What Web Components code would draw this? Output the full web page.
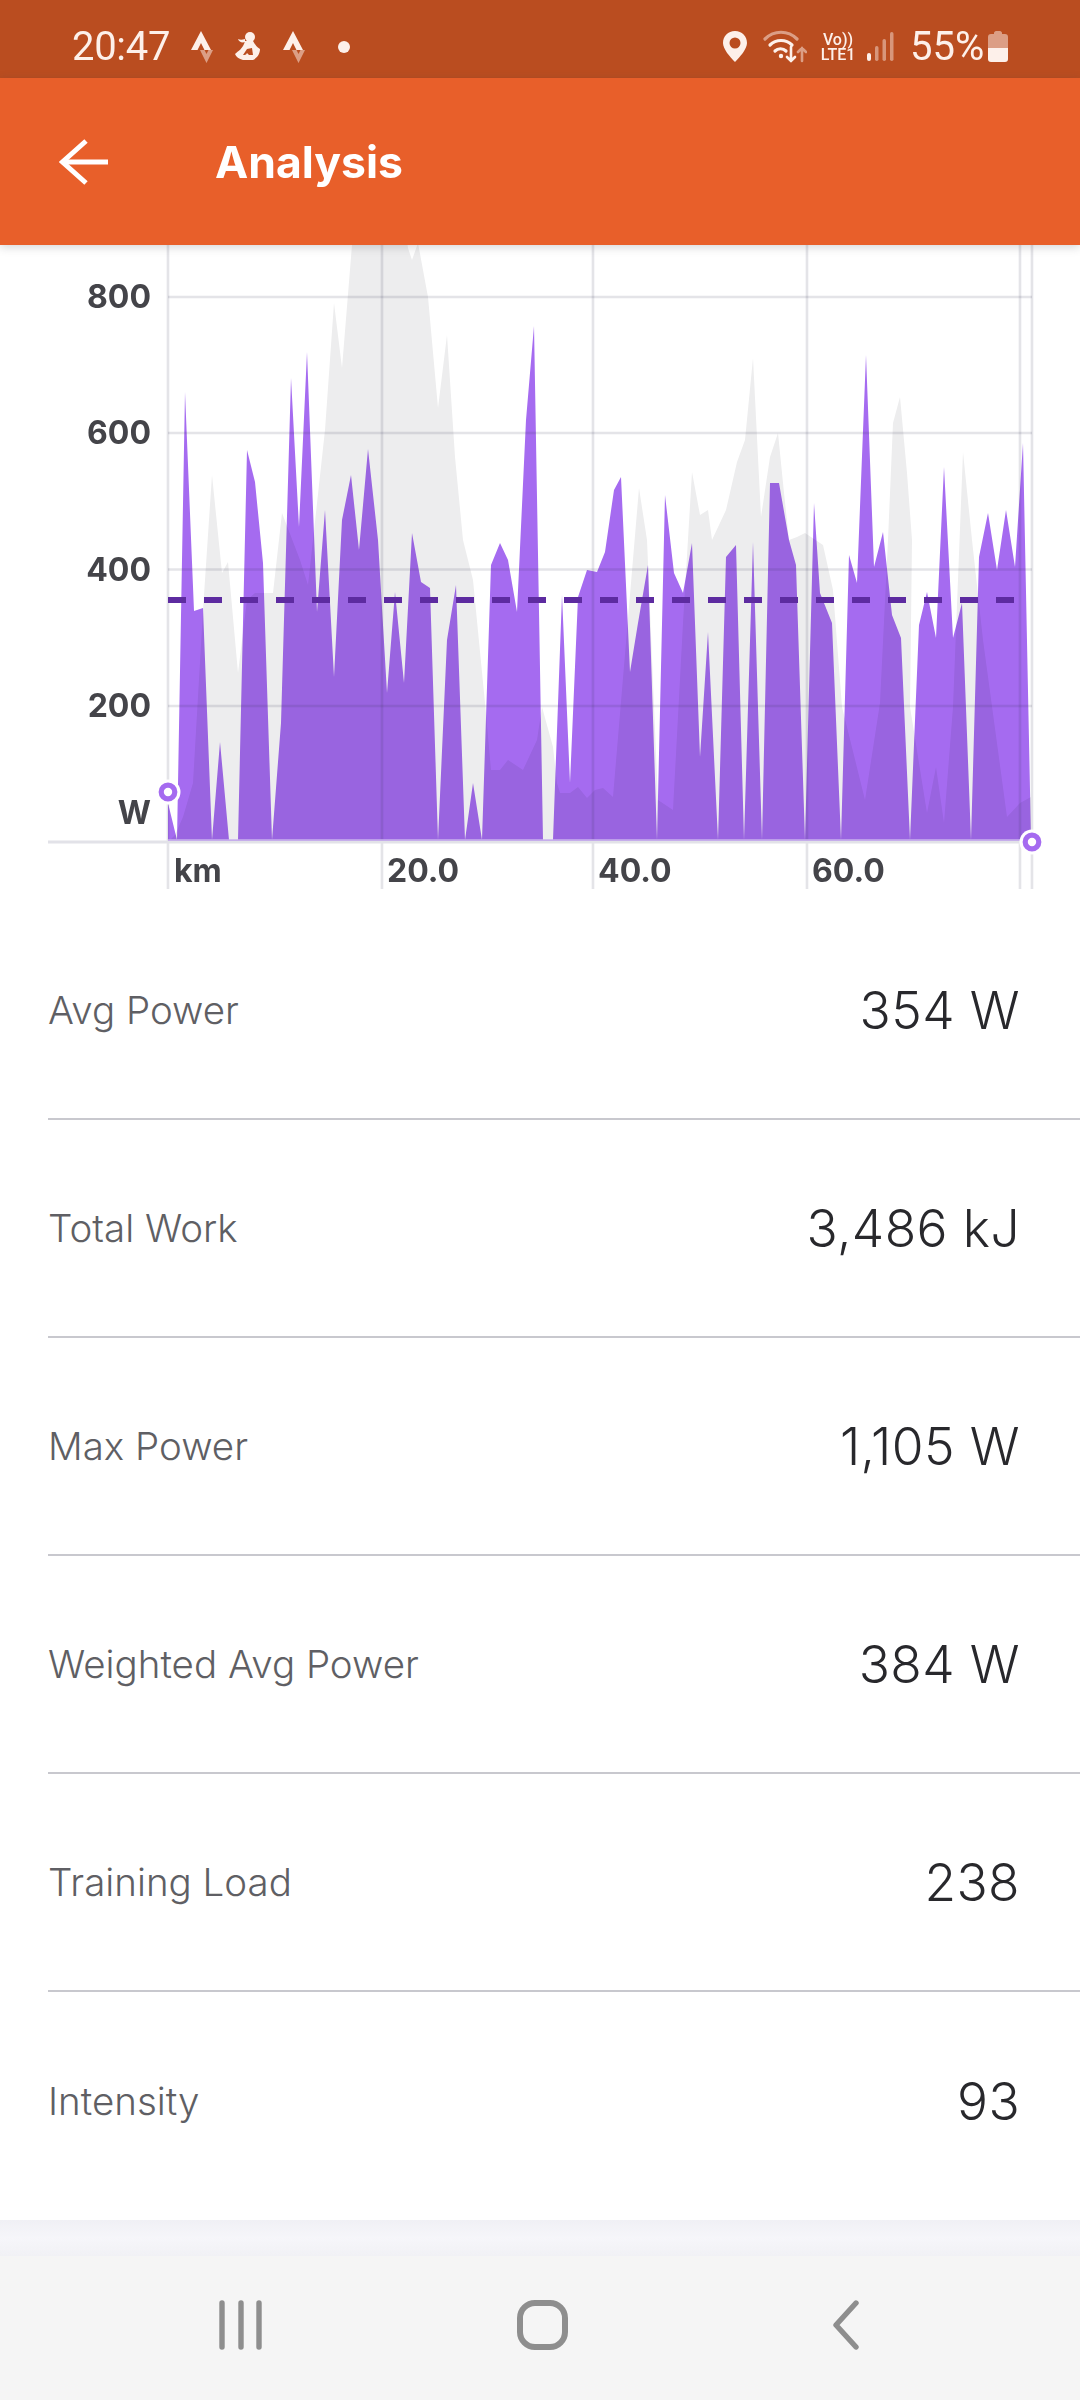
<!DOCTYPE html>
<html lang="en">
<head>
<meta charset="utf-8">
<title>Analysis</title>
<style>
    html, body { margin: 0; padding: 0; background: #fff; }
    body { width: 1080px; height: 2400px; overflow: hidden; display: flex; flex-direction: column; font-family: Inter, "Liberation Sans", sans-serif; }
</style>
</head>
<body>
<status-bar></status-bar>
<app-bar>Analysis</app-bar>
<power-chart></power-chart>
<stat-list>
    <stat-row><span slot="label">Avg Power</span><span slot="value">354 W</span></stat-row>
    <stat-row><span slot="label">Total Work</span><span slot="value">3,486 kJ</span></stat-row>
    <stat-row><span slot="label">Max Power</span><span slot="value">1,105 W</span></stat-row>
    <stat-row><span slot="label">Weighted Avg Power</span><span slot="value">384 W</span></stat-row>
    <stat-row><span slot="label">Training Load</span><span slot="value">238</span></stat-row>
    <stat-row last><span slot="label">Intensity</span><span slot="value">93</span></stat-row>
</stat-list>
<nav-bar></nav-bar>

<script>
const stravaIcon = `
    <svg class="strava" width="24" height="34" viewBox="0 0 24 34">
        <path d="M11 1 L21 20 H14.5 L11 13 L7.5 20 H1 Z" fill="#fdf0ea"/>
        <path d="M10 20 H14.5 L16.5 24 L18.5 20 H23 L16.5 33 Z" fill="#fdf0ea" opacity=".5"/>
    </svg>`;

class StatusBar extends HTMLElement {
    constructor() {
        super();
        const shadowRoot = this.attachShadow({ mode: 'open' });
        shadowRoot.innerHTML = `
            <style>
            :host {
                display: flex;
                flex: none;
                height: 78px;
                box-sizing: border-box;
                padding: 15px 72px 0 72px;
                align-items: center;
                justify-content: space-between;
                background: #ba4d20;
                color: #fdf0ea;
                font-family: Roboto, sans-serif;
            }
            .group { display: flex; align-items: center; }
            .time { font-size: 40px; line-height: 46px; width: 97px; letter-spacing: -.3px; white-space: nowrap; }
            .pct { font-size: 40px; line-height: 46px; width: 71px; margin-left: 16px; white-space: nowrap; }
            svg { display: block; flex: none; }
            .volte { width: 38px; margin-left: 12px; font-size: 16px; font-weight: 500; text-align: center; white-space: nowrap; }
            .volte div { height: 15px; line-height: 15px; }
            </style>
            <div class="group">
                <span class="time">20:47</span>
                <span style="margin-left:21px;display:flex">${stravaIcon}</span>
                <svg style="margin-left:21px" width="26" height="31" viewBox="0 0 26 31">
                    <circle cx="15" cy="6" r="5" fill="#fdf0ea"/>
                    <path d="M10 8 C7 9 5 9 3 8 C4 11 7 12 10 11 Z" fill="#fdf0ea"/>
                    <path d="M10 10 H18 C20 13 21 16 25 18 C25 23 22 27 18 29 H8 C4 28 1 26 0 23 C3 20 8 18 10 10 Z M8 24 C10 24 11 24 12 22 L14 24 H18 L17 17 L12 18 Z" fill="#fdf0ea" fill-rule="evenodd"/>
                </svg>
                <span style="margin-left:21px;display:flex">${stravaIcon}</span>
                <svg style="margin-left:32px" width="12" height="12" viewBox="0 0 12 12"><circle cx="6" cy="6" r="6" fill="#fdf0ea"/></svg>
            </div>
            <div class="group">
                <svg width="24" height="31" viewBox="0 0 24 31">
                    <path d="M12 0 C5 0 0 5 0 12 C0 18 7 26 12 31 C17 26 24 18 24 12 C24 5 19 0 12 0 Z M12 6.5 A5.5 5.5 0 1 1 12 17.5 A5.5 5.5 0 1 1 12 6.5 Z" fill="#fdf0ea" fill-rule="evenodd"/>
                </svg>
                <svg style="margin-left:16px" width="44" height="33" viewBox="0 0 44 33" fill="none" stroke="#fdf0ea" stroke-width="3.2" stroke-linecap="round">
                    <path d="M2 9 C11 0 25 0 34 9" opacity=".5"/>
                    <path d="M7 15 C13 9 23 9 29 15"/>
                    <path d="M12 21 C15 18 20 18 23 21"/>
                    <circle cx="18" cy="26" r="2.2" fill="#fdf0ea" stroke="none"/>
                    <path d="M28 17 V31 M24 27 L28 31 L32 27" stroke-width="2.6"/>
                    <path d="M39 31 V18 M35 22 L39 18 L43 22" stroke-width="2.6" opacity=".5"/>
                </svg>
                <div class="volte"><div>Vo))</div><div>LTE1</div></div>
                <svg style="margin-left:10px" width="27" height="31" viewBox="0 0 27 31" fill="#fdf0ea">
                    <rect x="0" y="22" width="4" height="8" rx="2"/>
                    <rect x="8" y="15" width="3.5" height="15" rx="1.7" opacity=".45"/>
                    <rect x="15.5" y="8" width="3.5" height="22" rx="1.7" opacity=".45"/>
                    <rect x="23" y="1" width="3.5" height="29" rx="1.7" opacity=".45"/>
                </svg>
                <span class="pct">55%</span>
                <svg style="margin-left:7px" width="20" height="31" viewBox="0 0 20 31" fill="#fdf0ea">
                    <path d="M6 2 C6 1 7 0 8 0 H12 C13 0 14 1 14 2 V3 H17 C19 3 20 4 20 6 V17 H0 V6 C0 4 1 3 3 3 H6 Z" opacity=".5"/>
                    <path d="M0 17 H20 V28 C20 30 19 31 17 31 H3 C1 31 0 30 0 28 Z"/>
                </svg>
            </div>
        `;
    }
}

class AppBar extends HTMLElement {
    constructor() {
        super();
        const shadowRoot = this.attachShadow({ mode: 'open' });
        shadowRoot.innerHTML = `
            <style>
            :host {
                display: flex;
                flex: none;
                position: relative;
                z-index: 2;
                height: 167px;
                align-items: center;
                box-sizing: border-box;
                padding: 0 0 0 59px;
                background: #e85f2a;
                color: #fff;
                box-shadow: 0 2px 9px rgba(60, 60, 70, .22);
            }
            svg { display: block; flex: none; }
            .title { margin-left: 107px; font: 700 44.5px Inter, "Liberation Sans", sans-serif; white-space: nowrap; }
            </style>
            <svg width="49" height="46" viewBox="0 0 49 46" fill="none" stroke="#fff" stroke-width="5">
                <path d="M49 23 H3"/>
                <path d="M27 2 L3.5 23 L27 44"/>
            </svg>
            <span class="title"><slot></slot></span>
        `;
    }
}

// traced from the reference, in page pixels
const POWER = [[168,842],[168,803],[177,840],[185,392],[194,611],[203,608],[212,840],[220,742],[229,840],[238,840],[247,450],[255,482],[263,563],[272,840],[281,723],[291,378],[299,527],[307,352],[317,612],[325,510],[334,677],[342,520],[351,475],[359,550],[368,449],[378,540],[387,693],[395,592],[404,683],[412,533],[421,582],[430,588],[438,840],[447,640],[456,585],[465,840],[473,783],[482,840],[491,565],[500,543],[508,560],[517,612],[526,420],[534,326],[543,840],[553,840],[562,595],[570,783],[578,597],[587,570],[597,572],[605,552],[614,490],[621,477],[630,672],[638,623],[648,565],[657,840],[665,495],[674,573],[683,593],[692,543],[700,757],[708,632],[718,840],[726,557],[736,545],[744,840],[753,542],[762,840],[770,483],[779,483],[789,540],[796,565],[805,840],[814,503],[820,593],[832,623],[841,840],[849,555],[857,583],[866,355],[874,567],[883,532],[892,615],[901,638],[910,840],[919,625],[927,592],[936,638],[944,467],[953,638],[962,603],[971,840],[979,557],[988,513],[997,570],[1006,510],[1015,567],[1023,443],[1031,840],[1031,842]];
const SPEED = [[168,842],[175,835],[183,817],[193,783],[203,610],[212,475],[222,573],[228,562],[238,673],[247,600],[255,593],[265,593],[273,593],[282,513],[300,560],[308,585],[313,540],[325,430],[334,303],[342,368],[352,245],[362,200],[400,200],[408,248],[412,260],[418,243],[428,297],[438,408],[447,335],[455,457],[463,540],[473,580],[485,703],[491,770],[500,770],[508,760],[523,770],[537,740],[542,707],[553,747],[557,783],[560,793],[570,793],[578,787],[587,798],[595,790],[603,788],[613,797],[622,690],[639,488],[647,540],[658,800],[673,810],[683,623],[692,472],[700,515],[708,510],[712,540],[726,510],[737,462],[745,440],[753,358],[761,517],[770,457],[778,433],[783,483],[789,540],[797,537],[805,533],[823,545],[833,590],[842,707],[865,800],[880,703],[888,540],[893,423],[900,397],[907,473],[912,540],[910,707],[927,813],[936,767],[944,823],[953,707],[963,452],[972,540],[983,640],[1007,817],[1020,803],[1031,797],[1031,842]];
const pts = list => list.map(p => p.join(',')).join(' ');

class PowerChart extends HTMLElement {
    constructor() {
        super();
        const shadowRoot = this.attachShadow({ mode: 'open' });
        const ys = [[297, '800'], [433, '600'], [569.5, '400'], [706, '200']];
        const xs = [[382, '20.0'], [593, '40.0'], [807, '60.0']];
        shadowRoot.innerHTML = `
            <style>
            :host { display: block; flex: none; height: 657px; overflow: hidden; }
            svg { display: block; }
            text { font: 700 32px Inter, "Liberation Sans", sans-serif; fill: #444449; }
            .grid { stroke: rgba(50, 50, 75, .13); stroke-width: 2.6; }
            .power { mix-blend-mode: multiply; }
            </style>
            <svg width="1080" height="657" viewBox="0 245 1080 657">
                <polygon points="${pts(SPEED)}" fill="#ededee"/>
                <polygon class="power" points="${pts(POWER)}" fill="#a56bf0"/>
                ${ys.map(([y]) => `<line class="grid" x1="168" x2="1032" y1="${y}" y2="${y}"/>`).join('')}
                ${[168, 382, 593, 807, 1020, 1032].map(x => `<line class="grid" x1="${x}" x2="${x}" y1="245" y2="889"/>`).join('')}
                <line x1="48" x2="1032" y1="842" y2="842" stroke="#e2e2e8" stroke-width="3"/>
                <line x1="168" x2="1032" y1="840" y2="840" stroke="#c9b0ee" stroke-width="1.5"/>
                <line x1="168" x2="1020" y1="600" y2="600" stroke="#5d2ba0" stroke-width="6" stroke-dasharray="18 18"/>
                ${ys.map(([y, t]) => `<text x="151" y="${y + 11}" text-anchor="end">${t}</text>`).join('')}
                <text x="151" y="824" text-anchor="end">W</text>
                <text x="174" y="882">km</text>
                ${xs.map(([x, t]) => `<text x="${x + 5}" y="882">${t}</text>`).join('')}
                <circle cx="168" cy="792" r="12.5" fill="#fff"/>
                <circle cx="168" cy="792" r="6.8" fill="#fff" stroke="#a56bf0" stroke-width="5.2"/>
                <circle cx="1032" cy="842" r="12.5" fill="#fff"/>
                <circle cx="1032" cy="842" r="6.8" fill="#fff" stroke="#a56bf0" stroke-width="5.2"/>
            </svg>
        `;
    }
}

class StatList extends HTMLElement {
    constructor() {
        super();
        const shadowRoot = this.attachShadow({ mode: 'open' });
        shadowRoot.innerHTML = `
            <style>
            :host { display: flex; flex-direction: column; flex: none; height: 1318px; background: #fff; }
            </style>
            <slot></slot>
        `;
    }
}

class StatRow extends HTMLElement {
    constructor() {
        super();
        const shadowRoot = this.attachShadow({ mode: 'open' });
        shadowRoot.innerHTML = `
            <style>
            :host {
                display: flex;
                flex: none;
                height: 218px;
                box-sizing: border-box;
                margin-left: 48px;
                padding-right: 60px;
                align-items: center;
                justify-content: space-between;
                border-bottom: 2px solid #c8c8ce;
                white-space: nowrap;
            }
            :host([last]) { border-bottom: 0; }
            .label { font: 300 38.5px Inter, "Liberation Sans", sans-serif; color: #5f5f64; }
            .value { font: 300 51.5px Inter, "Liberation Sans", sans-serif; letter-spacing: .4px; color: #28282c; }
            </style>
            <span class="label"><slot name="label"></slot></span>
            <span class="value"><slot name="value"></slot></span>
        `;
    }
}

class NavBar extends HTMLElement {
    constructor() {
        super();
        const shadowRoot = this.attachShadow({ mode: 'open' });
        shadowRoot.innerHTML = `
            <style>
            :host { display: block; flex: none; height: 180px; background: #f5f5f5; }
            .band { height: 36px; background: linear-gradient(#f0f0f5, #f6f6fa 50%, #f1f1f5); }
            .keys { display: flex; height: 144px; align-items: center; box-sizing: border-box; padding: 0 0 6px 219px; }
            svg { display: block; flex: none; }
            </style>
            <div class="band"></div>
            <div class="keys">
                <svg width="44" height="50" viewBox="0 0 44 50" fill="none" stroke="#8e8e8e" stroke-width="5.4" stroke-linecap="round">
                    <path d="M3 3 V47 M22 3 V47 M40 3 V47"/>
                </svg>
                <svg style="margin-left:254px" width="52" height="52" viewBox="0 0 52 52">
                    <rect x="3" y="4" width="45" height="44" rx="15" fill="none" stroke="#8e8e8e" stroke-width="6"/>
                </svg>
                <svg style="margin-left:263px" width="28" height="50" viewBox="0 0 28 50" fill="none" stroke="#8e8e8e" stroke-width="5.4" stroke-linecap="round" stroke-linejoin="round">
                    <path d="M24 3 L4 25 L24 47"/>
                </svg>
            </div>
        `;
    }
}

customElements.define('status-bar', StatusBar);
customElements.define('app-bar', AppBar);
customElements.define('power-chart', PowerChart);
customElements.define('stat-list', StatList);
customElements.define('stat-row', StatRow);
customElements.define('nav-bar', NavBar);
</script>
</body>
</html>
